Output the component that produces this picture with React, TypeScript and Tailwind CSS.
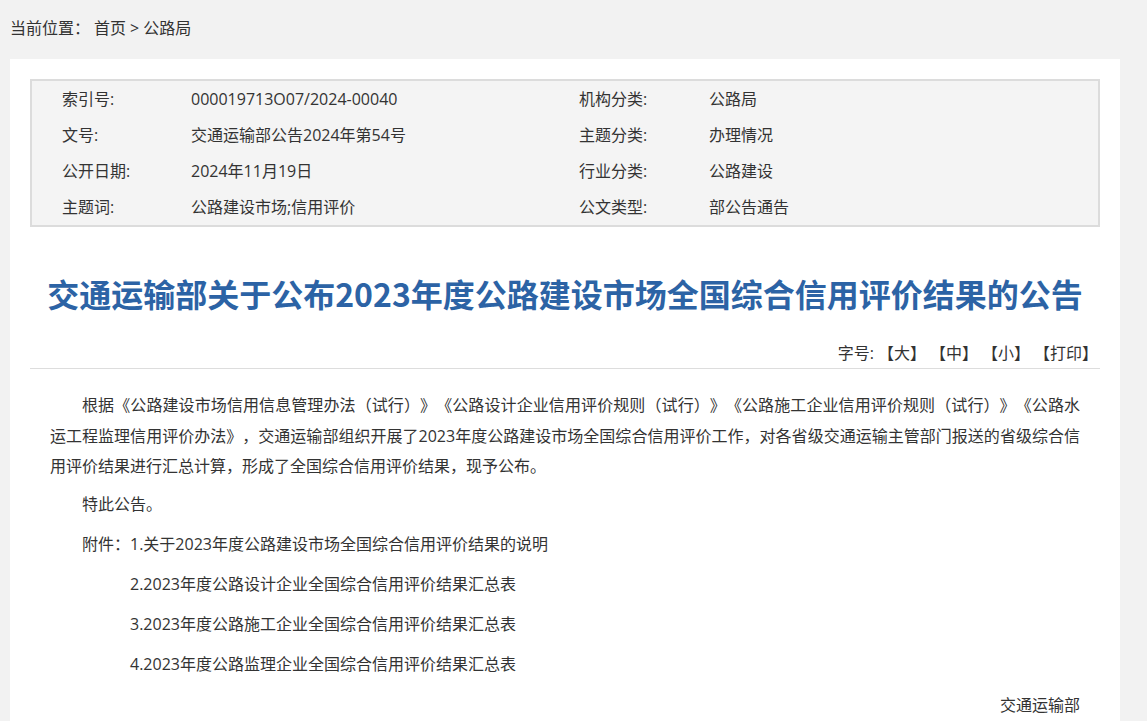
import React from "react";

const font = '"Open Sans", "Noto Sans CJK SC", "Noto Sans", sans-serif';

const rows: [string, string, string, string][] = [
  ["索引号:", "000019713O07/2024-00040", "机构分类:", "公路局"],
  ["文号:", "交通运输部公告2024年第54号", "主题分类:", "办理情况"],
  ["公开日期:", "2024年11月19日", "行业分类:", "公路建设"],
  ["主题词:", "公路建设市场;信用评价", "公文类型:", "部公告通告"],
];

export default function App() {
  return (
    <div
      className="min-h-[721px] w-full bg-[#f2f2f2] text-[#333333] [text-spacing-trim:space-all]"
      style={{ fontFamily: font }}
    >
      <div className="flex h-[59px] items-center pb-[3px] pl-[10px] text-[16px] text-[#333]">
        <span>当前位置：</span>
        <span className="ml-[4px]">首页</span>
        <span className="mx-[4px]">&gt;</span>
        <span>公路局</span>
      </div>
      <div className="ml-[10px] w-[1110px] bg-white px-[20px] pt-[20px] pb-[20px]">
        <div className="border-2 border-[#dcdcdc] bg-[#f4f4f4] pl-[30px] text-[16px] text-[#333]">
          {rows.map((r, i) => (
            <div key={i} className="grid h-[36px] grid-cols-[129px_388px_130px_1fr] items-center">
              <span>{r[0]}</span>
              <span>{r[1]}</span>
              <span>{r[2]}</span>
              <span>{r[3]}</span>
            </div>
          ))}
        </div>
        <h1
          className="mt-[46px] text-center text-[32px] font-bold leading-[40px] text-[#2c63a5]"
          style={{ fontFamily: '"Noto Sans CJK SC", "Noto Sans", sans-serif' }}
        >
          交通运输部关于公布2023年度公路建设市场全国综合信用评价结果的公告
        </h1>
        <div className="mt-[28px] flex h-[28px] items-center justify-end border-b border-[#dddddd] pr-[2px] pb-[4px] text-[16px] text-[#333]">
          <span>字号:</span>
          <span className="ml-[4px]">【大】</span>
          <span className="ml-[4px]">【中】</span>
          <span className="ml-[4px]">【小】</span>
          <span className="ml-[4px]">【打印】</span>
        </div>
        <div className="px-[20px] pt-[21px] text-[16px] leading-[30.5px] text-[#333]">
          <p className="mb-[7px] indent-[32px] text-justify">
            根据《公路建设市场信用信息管理办法（试行）》《公路设计企业信用评价规则（试行）》《公路施工企业信用评价规则（试行）》《公路水运工程监理信用评价办法》，交通运输部组织开展了2023年度公路建设市场全国综合信用评价工作，对各省级交通运输主管部门报送的省级综合信用评价结果进行汇总计算，形成了全国综合信用评价结果，现予公布。
          </p>
          <p className="mb-[10px] indent-[32px] leading-[30px]">特此公告。</p>
          <p className="mb-[10px] pl-[32px] leading-[30px]">附件：1.关于2023年度公路建设市场全国综合信用评价结果的说明</p>
          <p className="mb-[10px] pl-[80px] leading-[30px]">2.2023年度公路设计企业全国综合信用评价结果汇总表</p>
          <p className="mb-[10px] pl-[80px] leading-[30px]">3.2023年度公路施工企业全国综合信用评价结果汇总表</p>
          <p className="mb-[11px] pl-[80px] leading-[30px]">4.2023年度公路监理企业全国综合信用评价结果汇总表</p>
          <p className="text-right leading-[30px]">交通运输部</p>
        </div>
      </div>
    </div>
  );
}
